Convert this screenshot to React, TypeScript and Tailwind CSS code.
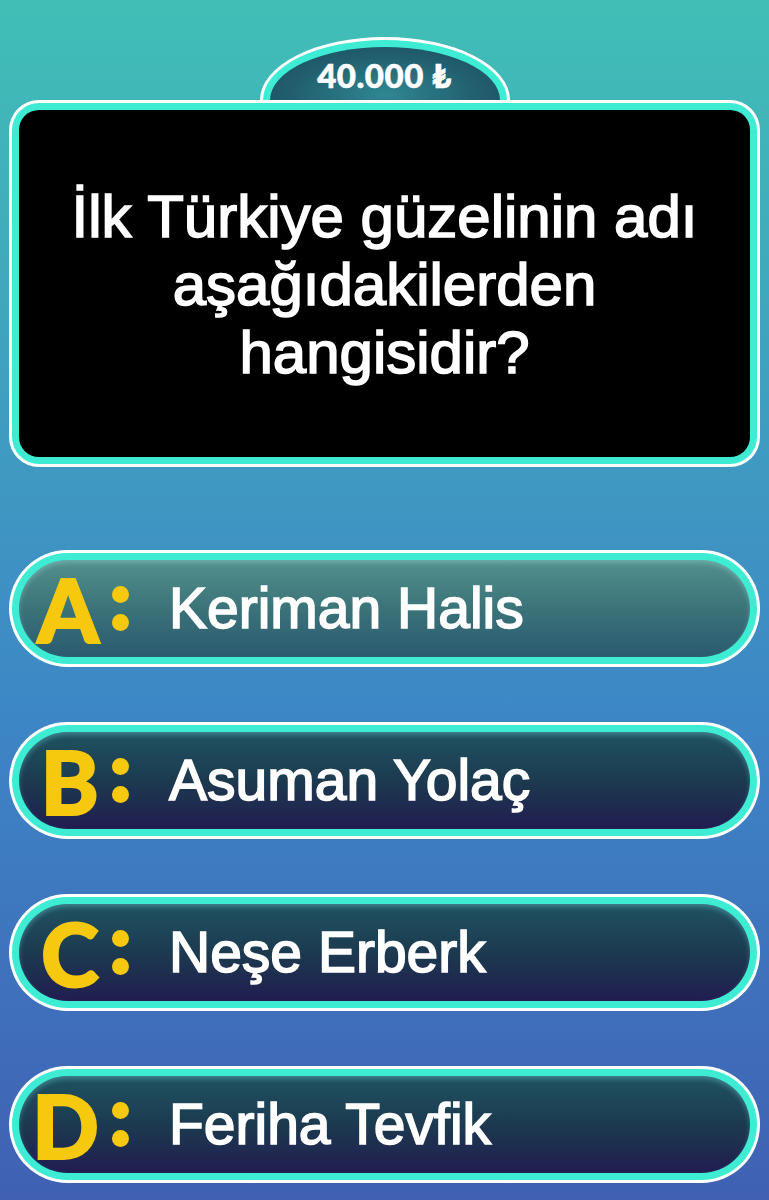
const answers = [
  { letter: 'A', text: 'Keriman Halis', active: true },
  { letter: 'B', text: 'Asuman Yolaç', active: false },
  { letter: 'C', text: 'Neşe Erberk', active: false },
  { letter: 'D', text: 'Feriha Tevfik', active: false },
]

const Answer = ({ letter, text, active }: { letter: string; text: string; active: boolean }) => (
  <div className="h-[117px] rounded-full bg-white p-[3px]">
    <div className="h-full rounded-full bg-[#3eecd3] p-[7px]">
      <div
        className={
          active
            ? 'h-full rounded-full flex items-center bg-[linear-gradient(180deg,#52908d_0%,#3b7379_50%,#2a5a70_100%)] shadow-[inset_0_3px_5px_rgba(160,230,220,0.35)]'
            : 'h-full rounded-full flex items-center bg-[linear-gradient(180deg,#1f5362_0%,#1c3a4f_50%,#211d50_100%)] shadow-[inset_0_3px_5px_rgba(120,220,220,0.35)]'
        }
      >
        <div className="w-[80px] flex justify-end">
          <span className="font-['Lato','Liberation_Sans',sans-serif] font-black text-[88px] leading-none text-[#f6c90e] [-webkit-text-stroke:2px_#f6c90e]">
            {letter}
          </span>
        </div>
        <div className="ml-[13px] flex flex-col gap-[11px]">
          <span className="block w-[17px] h-[17px] rounded-full bg-[#f6c90e]" />
          <span className="block w-[17px] h-[17px] rounded-full bg-[#f6c90e]" />
        </div>
        <span className="ml-[40px] font-['Liberation_Sans',Arial,sans-serif] text-[57px] leading-none text-white [-webkit-text-stroke:1.6px_white]">
          {text}
        </span>
      </div>
    </div>
  </div>
)

export default function App() {
  return (
    <div className="min-h-[1200px] w-full px-[9px] pt-[37px] bg-[linear-gradient(180deg,#41bfb6_0%,#3f9dc0_35%,#3d86c6_60%,#4060b3_100%)]">
      {/* prize dome */}
      <div className="mx-auto w-[250px] h-[63px] bg-white pt-[3px] px-[3px] rounded-[50%_50%_0_0/100%_100%_0_0]">
        <div className="h-full bg-[#3eecd3] pt-[7px] px-[7px] rounded-[50%_50%_0_0/100%_100%_0_0]">
          <div className="h-full flex items-center justify-center pt-[4px] rounded-[50%_50%_0_0/100%_100%_0_0] bg-[radial-gradient(ellipse_at_50%_90%,#2f8793_0%,#22606f_55%,#1b4a5c_100%)]">
            <span className="font-['Lato','DejaVu_Sans',sans-serif] font-black text-[33px] leading-none text-white tracking-[0.5px] [-webkit-text-stroke:0.6px_white]">
              40.000 ₺
            </span>
          </div>
        </div>
      </div>

      {/* question */}
      <div className="h-[367px] rounded-[30px] bg-white p-[3px]">
        <div className="h-full rounded-[27px] bg-[#3eecd3] p-[7px]">
          <div className="h-full rounded-[20px] bg-black flex items-center justify-center pt-[2px]">
            <p className="text-center font-['Liberation_Sans',Arial,sans-serif] text-[60px] leading-[68px] text-white [-webkit-text-stroke:1.6px_white]">
              İlk Türkiye güzelinin adı
              <br />
              aşağıdakilerden
              <br />
              hangisidir?
            </p>
          </div>
        </div>
      </div>

      {/* answers */}
      <div className="mt-[83px] flex flex-col gap-[55px]">
        {answers.map((a) => (
          <Answer key={a.letter} {...a} />
        ))}
      </div>
    </div>
  )
}
